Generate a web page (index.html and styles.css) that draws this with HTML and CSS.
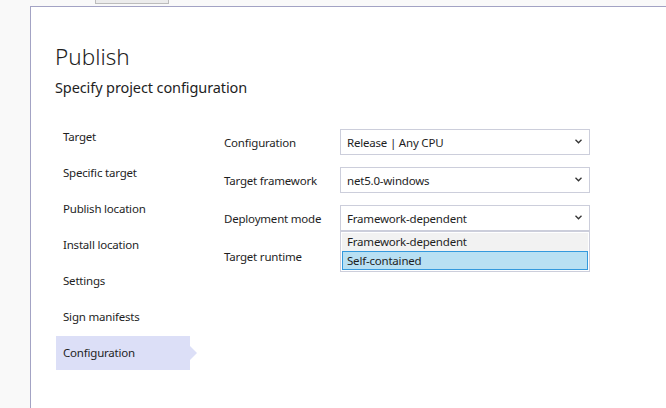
FILE: index.html
```html
<!DOCTYPE html>
<html>
<head>
<meta charset="utf-8">
<link rel="stylesheet" href="styles.css">
</head>
<body>
<div class="topbar"><div class="tab"></div></div>
<div class="panel">
  <h1 class="title">Publish</h1>
  <div class="subtitle">Specify project configuration</div>
  <div class="content">
    <ul class="nav">
      <li class="nav-item">Target</li>
      <li class="nav-item">Specific target</li>
      <li class="nav-item">Publish location</li>
      <li class="nav-item">Install location</li>
      <li class="nav-item">Settings</li>
      <li class="nav-item">Sign manifests</li>
      <li class="nav-item selected">Configuration</li>
    </ul>
    <div class="form">
      <div class="row">
        <div class="label">Configuration</div>
        <div class="select"><span>Release | Any CPU</span><svg class="chev" width="7" height="5" viewBox="0 0 7 5"><path d="M0.5 0.8 L3.5 3.8 L6.5 0.8" fill="none" stroke="#333" stroke-width="1.3"/></svg></div>
      </div>
      <div class="row">
        <div class="label">Target framework</div>
        <div class="select"><span>net5.0-windows</span><svg class="chev" width="7" height="5" viewBox="0 0 7 5"><path d="M0.5 0.8 L3.5 3.8 L6.5 0.8" fill="none" stroke="#333" stroke-width="1.3"/></svg></div>
      </div>
      <div class="row">
        <div class="label">Deployment mode</div>
        <div class="select open"><span>Framework-dependent</span><svg class="chev" width="7" height="5" viewBox="0 0 7 5"><path d="M0.5 0.8 L3.5 3.8 L6.5 0.8" fill="none" stroke="#333" stroke-width="1.3"/></svg>
          <ul class="dropdown">
            <li class="opt">Framework-dependent</li>
            <li class="opt active">Self-contained</li>
          </ul>
        </div>
      </div>
      <div class="row">
        <div class="label">Target runtime</div>
      </div>
    </div>
  </div>
</div>
</body>
</html>
```
FILE: styles.css
```css
html, body {
  margin: 0;
  padding: 0;
  height: 100%;
}
body {
  background: #f9f9f9;
  font-family: "Noto Sans", "Open Sans", sans-serif;
  color: #1e1e1e;
  overflow: hidden;
  display: flex;
  flex-direction: column;
}
.topbar {
  height: 6px;
  flex: none;
}
.tab {
  margin-left: 95px;
  width: 72px;
  height: 3px;
  background: #ececec;
  border: 1px solid #bcbcbc;
  border-top: none;
}
.panel {
  flex: 1;
  margin-left: 30px;
  background: #fff;
  border-top: 1px solid #a3a3c4;
  border-left: 1px solid #a3a3c4;
  padding-left: 24px;
}
.title {
  margin: 0;
  padding-top: 35px;
  font-weight: 300;
  font-size: 22.5px;
  line-height: 30px;
  color: #1e1e1e;
}
.subtitle {
  margin-top: 5px;
  font-size: 14.5px;
  line-height: 20px;
  letter-spacing: -0.1px;
  color: #1e1e1e;
}
.content {
  display: flex;
  margin-top: 23px;
  font-size: 11.5px;
  letter-spacing: -0.2px;
}
.nav {
  list-style: none;
  margin: 0 0 0 1px;
  padding: 0;
  display: flex;
  flex-direction: column;
  gap: 2px;
  width: 168px;
}
.nav-item {
  position: relative;
  width: 127px;
  height: 34px;
  padding-left: 7px;
  line-height: 34px;
  color: #1e1e1e;
}
.nav-item.selected {
  background: #dcdff7;
}
.nav-item.selected::after {
  content: "";
  position: absolute;
  right: -7px;
  top: 10px;
  border-left: 7px solid #dcdff7;
  border-top: 7px solid transparent;
  border-bottom: 7px solid transparent;
}
.form {
  margin-top: 9px;
  display: flex;
  flex-direction: column;
  gap: 12px;
}
.row {
  display: flex;
  align-items: center;
  height: 26px;
}
.label {
  width: 116px;
  color: #1e1e1e;
}
.select {
  position: relative;
  box-sizing: border-box;
  width: 250px;
  height: 26px;
  border: 1px solid #cccedb;
  background: #fff;
  display: flex;
  align-items: center;
  justify-content: space-between;
  padding: 0 7px 0 6px;
  color: #1e1e1e;
}
.chev {
  display: block;
  margin-bottom: 1px;
}
.dropdown {
  position: absolute;
  left: -1px;
  top: 25px;
  width: 250px;
  box-sizing: border-box;
  margin: 0;
  padding: 1px;
  list-style: none;
  background: #fff;
  border: 1px solid #cccedb;
}
.opt {
  height: 18px;
  line-height: 18px;
  padding-left: 5px;
  background: #f2f2f2;
  box-sizing: border-box;
}
.opt.active {
  background: #b8e0f3;
  border: 1px solid #3399dd;
  height: 19px;
  line-height: 17px;
  padding-left: 4px;
}
```
